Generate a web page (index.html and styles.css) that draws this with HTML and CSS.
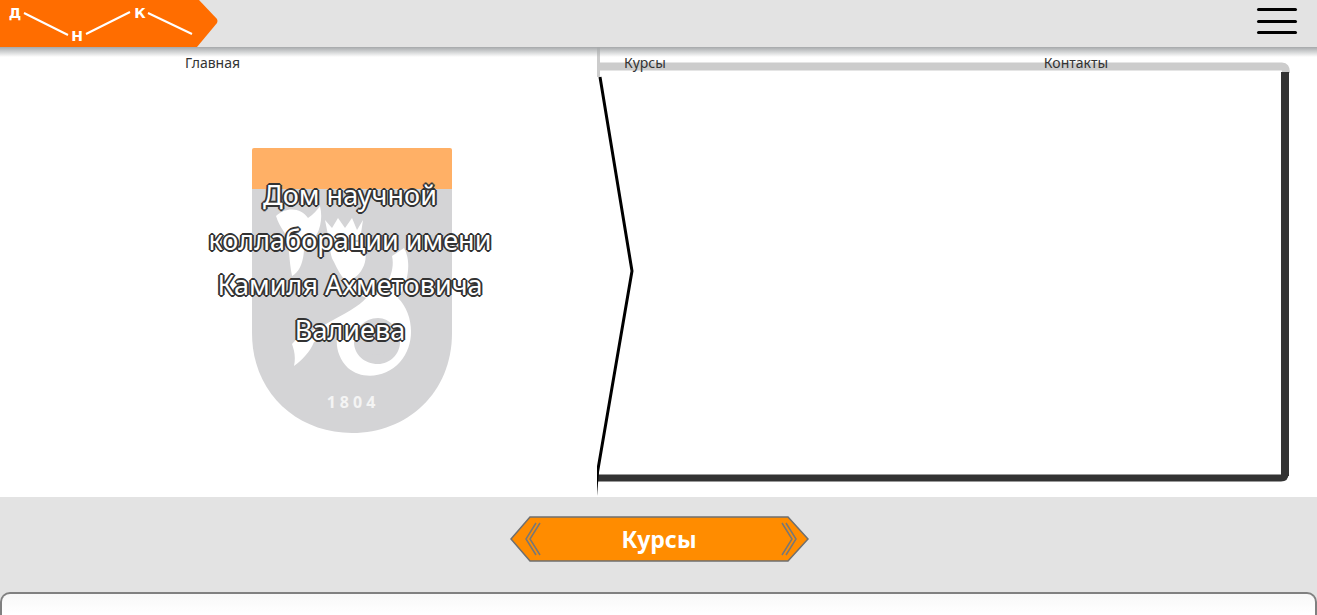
FILE: index.html
```html
<!DOCTYPE html>
<html>
  <head>
    <meta charset="utf-8">
    <title>Дом научной коллаборации</title>
    <link rel="stylesheet" href="styles.css">
  </head>
  <body>
    <header class="top">
      <svg class="logo" width="219" height="47" viewBox="0 0 219 47">
        <path class="logo-bg" d="M0 0H199L217 19Q218 21 217 23L197 47H0Z"/>
        <path class="logo-line" d="M24 13L68 35M86 34L130 12M148 13L192 34"/>
        <text class="logo-text" x="15" y="18">Д</text>
        <text class="logo-text" x="77" y="41">Н</text>
        <text class="logo-text" x="140" y="18">К</text>
      </svg>
      <button class="burger"><span></span><span></span><span></span></button>
    </header>

    <main class="main">
      <nav class="menu">
        <a class="menu-home">Главная</a>
        <a class="menu-courses">Курсы</a>
        <a class="menu-contacts">Контакты</a>
      </nav>

      <section class="hero">
        <svg class="shield" width="200" height="285" viewBox="0 0 200 285">
          <path class="shield-gray" d="M0 41H200V185C200 245 155 285 100 285C45 285 0 245 0 185Z"/>
          <path class="shield-top" d="M2 0H198Q200 0 200 2V41H0V2Q0 0 2 0Z"/>
          <path class="dragon" d="M24 68C34 58 50 60 56 70C62 66 65 62 68 58C72 74 66 92 52 100C52 112 48 124 40 128C36 108 38 92 32 84C28 78 26 74 24 68Z"/>
          <path class="dragon" d="M73 72L80 80L86 70L93 80L100 70L105 82L111 72L108 92H77Z"/>
          <path class="dragon" d="M78 94H108C118 104 114 122 102 130C112 144 124 146 134 136C140 128 142 116 140 108L152 100C160 114 156 136 146 150C162 166 164 196 148 214C134 230 110 232 96 220C84 208 82 192 88 178C78 186 70 192 62 194C58 204 50 212 42 218C44 208 42 202 40 196C48 186 62 182 74 176C92 166 108 158 114 150C100 144 88 128 82 114C78 108 78 100 78 94ZM126 170C112 170 102 182 102 194C102 206 112 216 126 216C138 216 148 206 148 194C148 182 138 170 126 170Z"/>
          <circle class="dragon-eye" cx="126" cy="193" r="14"/>
          <text class="shield-year" x="101" y="260">1804</text>
        </svg>
        <h1 class="hero-title">Дом научной коллаборации имени Камиля Ахметовича Валиева</h1>
      </section>

      <section class="panel">
        <svg class="panel-frame" width="720" height="450" viewBox="0 0 720 450">
          <path class="frame-light" d="M1.5 0V30"/>
          <path class="frame-top" d="M1 19.5H685Q689 19.5 689 26"/>
          <path class="frame-right" d="M688 25V429"/>
          <path class="frame-bottom" d="M0 431H684Q688 431 688 427"/>
          <path class="frame-arrow" d="M3 30L35 224L0 428"/>
          <path class="frame-tail" d="M0 424L2 424L0 449Z"/>
        </svg>
      </section>
    </main>

    <section class="band">
      <a class="course-btn">
        <svg class="course-shape" width="299" height="46" viewBox="0 0 299 46">
          <path class="shape-fill" d="M20 1H278L298 23L278 45H20L1 23Z"/>
          <path class="shape-chevron" d="M26 7L16 23L26 39M30 7L20 23L30 39M272 7L282 23L272 39M276 7L286 23L276 39"/>
        </svg>
        <span class="course-label">Курсы</span>
      </a>
    </section>

    <section class="card"></section>
  </body>
</html>
```

FILE: styles.css
```css
*{
  margin: 0;
  padding: 0;
  box-sizing: border-box;
}
body{
  height: 100vh;
  display: flex;
  flex-direction: column;
  overflow: hidden;
  background: #e3e3e3;
  font-family: "Noto Sans", "Open Sans", sans-serif;
}

/* шапка */
.top{
  height: 47px;
  flex: none;
  display: flex;
  justify-content: space-between;
  align-items: flex-start;
  background: #e3e3e3;
}
.logo{
  display: block;
}
.logo-bg{
  fill: #ff6d00;
}
.logo-line{
  fill: none;
  stroke: #fff;
  stroke-width: 2;
}
.logo-text{
  fill: #fff;
  font-size: 14px;
  font-weight: 700;
  text-anchor: middle;
  font-family: "DejaVu Sans", sans-serif;
}
.burger{
  width: 40px;
  margin: 8px 20px 0 0;
  display: flex;
  flex-direction: column;
  gap: 8.5px;
  border: 0;
  background: none;
}
.burger span{
  height: 3px;
  border-radius: 2px;
  background: #000;
}

/* основной блок */
.main{
  position: relative;
  height: 450px;
  flex: none;
  display: grid;
  grid-template-columns: 597px 1fr;
  background: #fff;
}
.main::before{
  content: "";
  position: absolute;
  left: 0;
  right: 0;
  top: 0;
  height: 10px;
  z-index: 2;
  background: linear-gradient(#a6a9ab, rgba(255,255,255,0));
}
.menu{
  position: absolute;
  left: 0;
  right: 0;
  top: 6px;
  z-index: 3;
  display: flex;
  font-size: 14px;
  line-height: 19px;
  color: #333;
}
.menu-home{
  margin-left: 185px;
}
.menu-courses{
  margin-left: 384px;
}
.menu-contacts{
  margin-left: 378px;
}

/* левая колонка */
.hero{
  position: relative;
  padding: 125px 0 0 200px;
}
.shield{
  position: absolute;
  left: 252px;
  top: 101px;
}
.shield-gray{
  fill: #d4d4d6;
}
.shield-top{
  fill: #ffb066;
}
.dragon{
  fill: #fff;
}
.dragon-eye{
  fill: #d4d4d6;
}
.shield-year{
  fill: #f4f4f4;
  font-size: 16px;
  font-weight: 700;
  letter-spacing: 4px;
  text-anchor: middle;
}
.hero-title{
  position: relative;
  width: 300px;
  font-size: 27px;
  font-weight: 400;
  line-height: 45px;
  text-align: center;
  color: #fff;
  text-shadow: -2px 0 0 #333, 2px 0 0 #333, 0 -2px 0 #333, 0 2px 0 #333, -1px -1px 0 #333, 1px 1px 0 #333, -1px 1px 0 #333, 1px -1px 0 #333;
}

/* правая рамка */
.panel{
  position: relative;
}
.panel-frame{
  display: block;
}
.panel-frame path{
  fill: none;
}
.frame-light{
  stroke: #ccc;
  stroke-width: 3;
}
.frame-top{
  stroke: #ccc;
  stroke-width: 8;
}
.frame-right{
  stroke: #333;
  stroke-width: 8;
}
.frame-bottom{
  stroke: #333;
  stroke-width: 7;
}
.frame-arrow{
  stroke: #000;
  stroke-width: 3;
}
.panel-frame .frame-tail{
  fill: #000;
}

/* полоса с кнопкой */
.band{
  height: 95px;
  flex: none;
  display: flex;
  justify-content: center;
  padding: 19px 0 0 1px;
}
.course-btn{
  position: relative;
  width: 299px;
  height: 46px;
  display: flex;
  align-items: center;
  justify-content: center;
}
.course-shape{
  position: absolute;
  left: 0;
  top: 0;
}
.shape-fill{
  fill: #ff8c00;
  stroke: #6f6f6f;
  stroke-width: 1.5;
}
.shape-chevron{
  fill: none;
  stroke: #777;
  stroke-width: 1.5;
}
.course-label{
  position: relative;
  font-size: 23px;
  font-weight: 700;
  color: #fff;
}

/* нижняя карточка */
.card{
  flex: 1;
  background: linear-gradient(#f8f8f8, #fff 20px);
  border: 2px solid #808080;
  border-bottom: 0;
  border-radius: 10px 10px 0 0;
}
```
